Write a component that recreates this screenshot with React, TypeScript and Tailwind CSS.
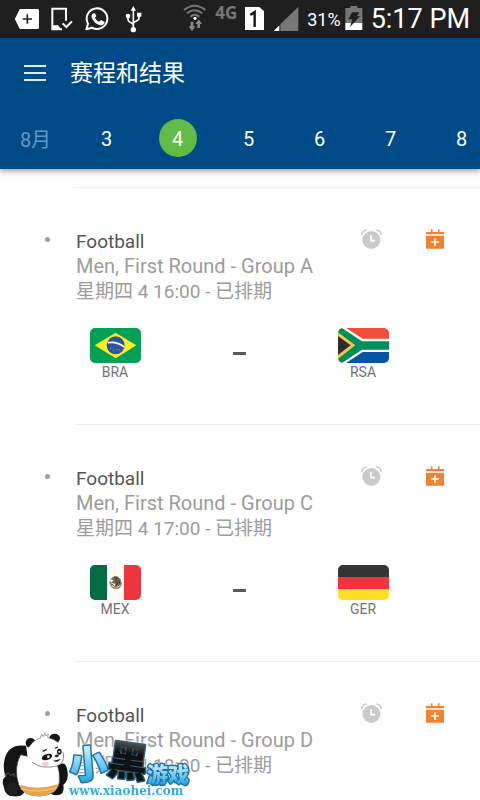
import React, { useState } from 'react';

const cjk = "font-['Roboto','Noto_Sans_CJK_SC',sans-serif]";

const days = [3, 4, 5, 6, 7, 8];

const matches = [
  { group: 'Group A', time: '16:00', home: 'BRA', away: 'RSA' },
  { group: 'Group C', time: '17:00', home: 'MEX', away: 'GER' },
  { group: 'Group D', time: '18:00', home: '', away: '' },
];

function StatusBar() {
  return (
    <div className="flex h-[38px] shrink-0 items-center justify-between bg-[#1f1f1f] pr-2.5 pl-[15px] text-white">
      <div className="flex items-center">
        <svg width="24" height="38" viewBox="45 0 72 114">
          <path d="M61 27h52q4 0 4 4v52q0 4-4 4H61q-2 0-3-2L46 60q-2-3 0-6l12-25q1-2 3-2z" fill="#fff" />
          <path d="M82 43v28M68 57h28" stroke="#222" strokeWidth="5" />
        </svg>
        <svg className="ml-3" width="22" height="38" viewBox="155 0 66 114" fill="none" stroke="#fff">
          <path d="M200 62V26h-41v62h29" strokeWidth="6" />
          <path d="M158 76h18l10 13h-28z" fill="#fff" stroke="none" />
          <path d="M190 70l11 11 17-17" strokeWidth="6" />
        </svg>
        <svg className="ml-3" width="26" height="38" viewBox="262 0 78 114">
          <path d="M266 88l5-17a31 31 0 1 1 12 12z" fill="none" stroke="#fff" strokeWidth="6" strokeLinejoin="round" />
          <path d="M287 40c-6 3-7 10-4 15 6 12 14 19 26 21 6 1 12-4 12-10l-11-6-6 5c-6-3-9-7-12-12l4-5-4-8z" fill="#fff" />
        </svg>
        <svg className="ml-3.5" width="18" height="38" viewBox="381 0 54 114" fill="none" stroke="#fff">
          <path d="M406 88V26M390 51v7q0 5 4 7l12 8M423 46v8q0 5-4 7l-13 7" strokeWidth="5" />
          <path d="M406 18l8 14h-16z" fill="#fff" stroke="none" />
          <circle cx="406" cy="89" r="8" fill="#fff" stroke="none" />
          <circle cx="390" cy="48" r="7" fill="#fff" stroke="none" />
          <path d="M417 38h13v12h-13z" fill="#fff" stroke="none" />
        </svg>
      </div>
      <div className="flex items-center">
        <svg width="24" height="38" viewBox="545 0 72 114" fill="none" stroke="#777">
          <path d="M548 30q32-26 64 0" strokeWidth="6" />
          <path d="M557 40q23-18 46 0M567 50q13-11 27 0" strokeWidth="6" />
          <circle cx="581" cy="55" r="5" fill="#fff" stroke="none" />
          <path d="M568 65h8v14h6l-10 15-10-15h6zM588 84h8V72h6l-10-14-10 14h6z" fill="#888" stroke="none" />
        </svg>
        <span className="ml-2 self-start pt-0.5 font-['Open_Sans',sans-serif] text-[17px] leading-[21px] font-bold text-[#777]">4G</span>
        <svg className="ml-2" width="19" height="38" viewBox="732 0 57 114">
          <path d="M732 21h43l14 13v56h-57z" fill="#fff" />
          <path d="M748 45l13-9v45" fill="none" stroke="#111" strokeWidth="7" />
        </svg>
        <svg className="ml-2.5" width="25" height="38" viewBox="341 0 75 114">
          <path d="M414 20v73h-54V73z" fill="#777" />
          <path d="M357 76v17h-17z" fill="#fff" />
        </svg>
        <span className="ml-2 font-[Roboto,sans-serif] text-[18px]">31%</span>
        <svg className="ml-1" width="18" height="38" viewBox="314 0 54 114">
          <path d="M315 24h15v-6h21v6h15v46h-51z" fill="#777" />
          <path d="M315 69h51v21h-51z" fill="#fff" />
          <path d="M335 37h22l-7 12h9l-30 32 7-23h-12z" fill="#1f1f1f" />
        </svg>
        <span className="ml-2 font-[Roboto,sans-serif] text-[27px] leading-9">5:17 PM</span>
      </div>
    </div>
  );
}

function Flag({ code }: { code: string }) {
  return (
    <div className="h-[35px] w-[51px] overflow-hidden rounded-[5px]">
      {code === 'BRA' && (
        <svg width="51" height="35" viewBox="0 0 153 105">
          <path d="M0 0h153v105H0z" fill="#00a156" />
          <path d="M14 52L77 14l62 38-62 39z" fill="#fdf01c" />
          <circle cx="77" cy="52" r="27" fill="#2b55a4" />
          <path d="M53 44q28-5 50 13" stroke="#fff" strokeWidth="5" fill="none" />
          <path d="M60 60l4 2m4 4l5 1m6-4l4 3m4-1l4 3" stroke="#9fb6dd" strokeWidth="2" />
        </svg>
      )}
      {code === 'RSA' && (
        <svg width="51" height="35" viewBox="0 0 153 105">
          <path d="M0 0h153v105H0z" fill="#fff" />
          <path d="M24 0h129v32H74z" fill="#f15038" />
          <path d="M24 105h129V72H74z" fill="#0753a5" />
          <path d="M0 0h12l60 40h81v25H72L12 105H0z" fill="#008e5a" />
          <path d="M0 13l52 39L0 92z" fill="#f7c64c" />
          <path d="M0 24l38 28L0 81z" fill="#302d2e" />
        </svg>
      )}
      {code === 'MEX' && (
        <svg width="51" height="35" viewBox="0 0 153 105">
          <path d="M0 0h51v105H0z" fill="#066b42" />
          <path d="M51 0h51v105H51z" fill="#fbfbfb" />
          <path d="M102 0h51v105h-51z" fill="#ee353b" />
          <path d="M60 48c0 27 33 31 34 3" stroke="#8c9a6b" strokeWidth="5" fill="none" />
          <path d="M61 43q9-11 20-9l11 9q4 14-7 21l-14 5 6-12-14-4 8-7z" fill="#80664b" />
          <path d="M72 35l11 5-8 6 9 8-8 6M63 56l10 7M85 44l5 12" stroke="#3e3428" strokeWidth="3" fill="none" />
          <path d="M71 69h12" stroke="#c69553" strokeWidth="4" />
        </svg>
      )}
      {code === 'GER' && (
        <svg width="51" height="35" viewBox="0 0 153 105">
          <path d="M0 0h153v36H0z" fill="#363435" />
          <path d="M0 36h153v36H0z" fill="#ee353b" />
          <path d="M0 72h153v33H0z" fill="#ffdd26" />
        </svg>
      )}
    </div>
  );
}

function Team({ code }: { code: string }) {
  return (
    <div className="flex flex-col items-center">
      <Flag code={code} />
      <span className="text-[14px] leading-[18px] text-[#747474]">{code}</span>
    </div>
  );
}

function MatchCard({ match }: { match: (typeof matches)[number] }) {
  return (
    <article className="h-[237px] shrink-0">
      <div className="ml-[75px] border-t border-[#eeeeee]" />
      <div className="flex items-start pt-[41px] pr-9 pl-[45px]">
        <span className="mt-2 size-[5px] rounded-full bg-[#a0a0a0]" />
        <div className="ml-[26px] flex-1 text-[19px] leading-[25px] whitespace-nowrap text-[#9c9c9c]">
          <h2 className="text-[#555]">Football</h2>
          <p className="text-[20px]">Men, First Round - {match.group}</p>
          <p>星期四 4 {match.time} - 已排期</p>
        </div>
        <button aria-label="提醒" className="shrink-0">
          <svg width="22" height="22" viewBox="0 0 66 66">
            <circle cx="31" cy="33" r="27" fill="#cacaca" />
            <path d="M2 18Q4 5 17 3M46 3q13 2 15 15" stroke="#cacaca" strokeWidth="5" fill="none" />
            <path d="M30 18v17h12" stroke="#fff" strokeWidth="5" fill="none" />
          </svg>
        </button>
        <button aria-label="添加到日历" className="ml-[43px] shrink-0">
          <svg width="18" height="22" viewBox="0 0 54 66">
            <path d="M0 9h54v7H0zM0 20h54v39H0z" fill="#f08232" />
            <path d="M17 1v10M38 1v10" stroke="#f08232" strokeWidth="5" />
            <path d="M27 28v23M15 39h24" stroke="#fff" strokeWidth="5" />
          </svg>
        </button>
      </div>
      {match.home && (
        <div className="grid grid-cols-3 pt-6 pr-[55px] pl-[53px]">
          <Team code={match.home} />
          <div className="flex justify-center pt-6">
            <span className="h-[3px] w-[13px] bg-[#5a5a5a]" />
          </div>
          <Team code={match.away} />
        </div>
      )}
    </article>
  );
}

function Panda() {
  return (
    <svg width="70" height="72" viewBox="0 100 210 216" className="shrink-0">
      <path d="M78 153Q18 146 12 205q-3 20 5 40-14 10-6 30 4 32 32 30 28 2 32-20l14-60z" fill="#151515" />
      <path d="M10 240l8 2 6-8 8 8 10-5 2 10" fill="none" stroke="#777" strokeWidth="2" />
      <path d="M174 212q24-10 28 14 6 30-12 45 6 30-20 31-22 0-22-20z" fill="#151515" />
      <path d="M62 180q-22 40-6 90 14 34 62 34 52-2 60-40 4-30-8-60z" fill="#fff" stroke="#333" strokeWidth="2" />
      <path d="M60 271q55 17 113-2-8 34-55 36-47-1-58-34z" fill="#eba347" />
      <path d="M62 282q54 15 108-3" fill="none" stroke="#fac575" strokeWidth="4" />
      <circle cx="92" cy="145" r="15" fill="#151515" />
      <ellipse cx="164" cy="131" rx="16" ry="14" fill="#151515" />
      <path d="M95 147q10-13 26-17l4-12 4 8 6-12 1 10 9-5-2 10q36 6 47 44 6 32-20 41-43 11-73-11-30-25-2-56z" fill="#fff" />
      <path d="M98 144q10-10 23-14l4-12 4 8 6-12 1 10 9-5-2 10q20 4 32 14" fill="none" stroke="#777" strokeWidth="2" />
      <path d="M190 173q6 32-20 41-43 11-73-11" fill="none" stroke="#555" strokeWidth="2" />
      <ellipse cx="141" cy="187" rx="16" ry="9" fill="#151515" transform="rotate(-18 141 187)" />
      <ellipse cx="178" cy="171" rx="7" ry="9" fill="#151515" />
      <circle cx="145" cy="186" r="4" fill="#fff" />
      <circle cx="178" cy="171" r="3" fill="#fff" />
      <path d="M128 170l12-6M165 161l9-4" stroke="#222" strokeWidth="4" />
      <ellipse cx="136" cy="208" rx="11" ry="6" fill="#ffc7c7" />
      <path d="M164 184q8-7 12-1-5 8-12 1m-3 14q12 7 20-5" fill="#222" stroke="#222" strokeWidth="2" />
      <path d="M183 207q15-4 16 15-9 10-21-4z" fill="#151515" />
      <ellipse cx="37" cy="283" rx="19" ry="20" fill="#202020" />
    </svg>
  );
}

function Watermark() {
  return (
    <div className="pointer-events-none absolute bottom-0 left-0 flex items-end">
      <Panda />
      <svg
        width="124"
        height="72"
        viewBox="70 728 124 72"
        className="overflow-visible font-['Noto_Sans_CJK_SC',sans-serif] font-black [filter:drop-shadow(0_0_1px_#fff)]"
        strokeLinejoin="round"
        paintOrder="stroke"
      >
        <defs>
          <linearGradient id="sky" x1="0" y1="0" x2="0" y2="1">
            <stop offset="0.2" stopColor="#d5f5ff" />
            <stop offset="0.9" stopColor="#18a5e6" />
          </linearGradient>
          <linearGradient id="ink" x1="0" y1="0" x2="0" y2="1">
            <stop offset="0.1" stopColor="#777" />
            <stop offset="0.4" stopColor="#111" />
          </linearGradient>
        </defs>
        <text x="69" y="778" fontSize="38" fill="url(#sky)" stroke="#2173a0" strokeWidth="3" transform="rotate(-5 88 763)">小</text>
        <text x="108" y="776" fontSize="40" fill="url(#ink)" stroke="#2d5f7c" strokeWidth="3" transform="rotate(8 128 760)">黑</text>
        <text x="147" y="782" fontSize="21" fill="url(#sky)" stroke="#2173a0" strokeWidth="3">游戏</text>
        <text x="69" y="795" fontSize="12" className="font-['DejaVu_Serif',serif] font-bold" fill="#35aee0" stroke="#fff" strokeWidth="2">www.xiaohei.com</text>
      </svg>
    </div>
  );
}

export default function App() {
  const [selected, setSelected] = useState(4);

  return (
    <div className={`relative flex h-screen flex-col overflow-hidden bg-white ${cjk}`}>
      <StatusBar />
      <header className="z-10 shrink-0 bg-[#004a87] text-white shadow-[0_2px_6px_rgba(0,0,0,0.4)]">
        <div className="flex h-[70px] items-center pl-6">
          <button aria-label="菜单" className="flex w-[22px] flex-col gap-[5px]">
            <span className="h-0.5 bg-[#d9efff]" />
            <span className="h-0.5 bg-[#d9efff]" />
            <span className="h-0.5 bg-[#d9efff]" />
          </button>
          <h1 className="ml-6 pt-0.5 text-[23px] leading-8">赛程和结果</h1>
        </div>
        <nav className="flex h-[61px] overflow-hidden pt-[11px] text-[20px]">
          <span className="w-[71px] shrink-0 pt-0.5 text-center leading-[38px] text-[#6598c4]">8月</span>
          {days.map((day) => (
            <div key={day} className="flex w-[71px] shrink-0 justify-center">
              <button
                onClick={() => setSelected(day)}
                className={`size-[38px] rounded-full pt-0.5 ${day === selected ? 'bg-[#62bb46]' : ''}`}
              >
                {day}
              </button>
            </div>
          ))}
        </nav>
      </header>
      <main className="flex flex-1 flex-col overflow-hidden pt-[18px]">
        {matches.map((match) => (
          <MatchCard key={match.group} match={match} />
        ))}
      </main>
      <Watermark />
    </div>
  );
}
